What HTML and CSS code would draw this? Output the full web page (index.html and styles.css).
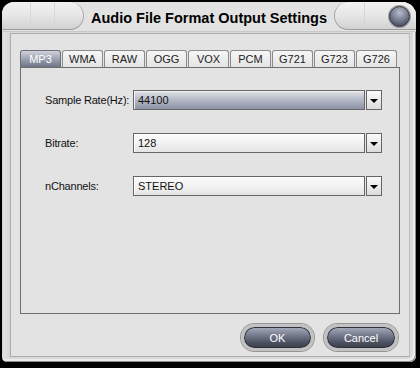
FILE: index.html
```html
<!DOCTYPE html>
<html lang="en">
<head>
    <meta charset="UTF-8">
    <meta name="viewport" content="width=device-width, initial-scale=1.0">
    <title>Audio File Format Output Settings</title>
    <link rel="stylesheet" href="styles.css">
</head>
<body>
    <div class="window">
        <div class="titlebar">
            <div class="bump bump-left"><span class="seam"></span><span class="seam"></span></div>
            <div class="title">Audio File Format Output Settings</div>
            <div class="bump bump-right"><span class="seam"></span><span class="close-btn"></span></div>
        </div>
        <div class="client">
            <div class="tabs">
                <div class="tab active">MP3</div>
                <div class="tab">WMA</div>
                <div class="tab">RAW</div>
                <div class="tab">OGG</div>
                <div class="tab">VOX</div>
                <div class="tab">PCM</div>
                <div class="tab">G721</div>
                <div class="tab">G723</div>
                <div class="tab">G726</div>
            </div>
            <div class="panel">
                <div class="row">
                    <label>Sample Rate(Hz):</label>
                    <div class="combo">
                        <div class="field focused">44100</div>
                        <div class="drop"><span class="arrow"></span></div>
                    </div>
                </div>
                <div class="row">
                    <label>Bitrate:</label>
                    <div class="combo">
                        <div class="field">128</div>
                        <div class="drop"><span class="arrow"></span></div>
                    </div>
                </div>
                <div class="row">
                    <label>nChannels:</label>
                    <div class="combo">
                        <div class="field">STEREO</div>
                        <div class="drop"><span class="arrow"></span></div>
                    </div>
                </div>
            </div>
            <div class="buttons">
                <button class="pill ok">OK</button>
                <button class="pill cancel">Cancel</button>
            </div>
        </div>
    </div>
</body>
</html>
```

FILE: styles.css
```css
body {
    margin: 0;
    background: #000;
    font-family: "Liberation Sans", Arial, sans-serif;
    font-size: 11px;
    color: #111;
}
.window {
    width: 414px;
    height: 360px;
    margin: 2px 0 0 2px;
    background: linear-gradient(to right, #cfcfcf, #e2e2e2 2px, #d8d8d8 7px);
    border-radius: 12px 14px 6px 5px;
    box-sizing: border-box;
    display: flex;
    flex-direction: column;
    overflow: hidden;
    box-shadow: inset -1px -1px 0 #8a8a8a, inset -3px -3px 0 #ececec;
}
.titlebar {
    height: 30px;
    display: flex;
    align-items: flex-start;
    background: #e2e2e2;
    border-bottom: 1px solid #c8c8c8;
    box-sizing: border-box;
}
.bump {
    height: 28px;
    background: linear-gradient(#f2f2f2, #e6e6e6 50%, #d2d2d2);
    border-bottom: 1px solid #9c9c9c;
    box-sizing: border-box;
    display: flex;
    align-items: center;
    position: relative;
}
.bump-left {
    width: 82px;
    border-radius: 12px 14px 14px 0;
    border-right: 1px solid #a8a8a8;
    padding-left: 28px;
    gap: 23px;
}
.bump-right {
    width: 82px;
    border-radius: 14px 14px 0 14px;
    border-left: 1px solid #a8a8a8;
    padding-left: 29px;
}
.seam {
    width: 1px;
    height: 26px;
    background: #d6d6d6;
}
.close-btn {
    position: absolute;
    right: 6px;
    top: 4px;
    width: 19px;
    height: 19px;
    border-radius: 50%;
    border: 1px solid #2a2d36;
    background: radial-gradient(circle at 50% 30%, #b8bdcc, #7b8296 45%, #3e4352 90%);
    box-shadow: 0 0 0 1px #a0a0a0;
}
.title {
    flex: 1;
    text-align: center;
    font-weight: bold;
    font-size: 14.5px;
    line-height: 32px;
    color: #000;
}
.client {
    flex: 1;
    margin: 1px 6px 5px 8px;
    background: #e3e3e3;
    border: 1px solid #ababab;
    border-right-color: #bdbdbd;
    padding: 16px 9px 0;
    box-sizing: border-box;
}
.tabs {
    display: flex;
    gap: 1px;
    height: 17px;
}
.tab {
    width: 41px;
    height: 17px;
    box-sizing: border-box;
    border: 1px solid #8c8c8c;
    border-bottom: none;
    border-radius: 3px 3px 0 0;
    background: linear-gradient(#f6f6f6, #e4e4e4);
    text-align: center;
    line-height: 16px;
    color: #222;
}
.tab.active {
    background: linear-gradient(#cfd2d9, #9da2b0 50%, #6e7486);
    border-color: #6a6e78;
    color: #fff;
}
.panel {
    height: 247px;
    border: 1px solid #6e6e6e;
    box-sizing: border-box;
    padding: 22px 0 0 24px;
    display: flex;
    flex-direction: column;
    gap: 23px;
}
.row {
    display: flex;
    align-items: center;
    height: 20px;
}
.row label {
    width: 88px;
    letter-spacing: -0.2px;
    color: #111;
}
.combo {
    display: flex;
    gap: 1px;
}
.field {
    width: 232px;
    height: 20px;
    box-sizing: border-box;
    border: 1px solid #666;
    background: linear-gradient(#fcfcfc, #f2f2f2 50%, #e4e4e4);
    padding-left: 4px;
    line-height: 18px;
    box-shadow: inset 1px 1px 0 #fff;
}
.field.focused {
    background: linear-gradient(#e2e4e9, #b8bcc8 45%, #8d93a6);
    box-shadow: inset 1px 1px 0 #f0f0f0;
}
.drop {
    width: 16px;
    height: 20px;
    box-sizing: border-box;
    border: 1px solid #666;
    background: linear-gradient(#fafafa, #dcdcdc);
    display: flex;
    align-items: center;
    justify-content: center;
}
.arrow {
    width: 0;
    height: 0;
    border-left: 4px solid transparent;
    border-right: 4px solid transparent;
    border-top: 4px solid #000;
    margin-top: 1px;
}
.buttons {
    display: flex;
    justify-content: flex-end;
    gap: 10px;
    margin-top: 10px;
    padding-right: 2px;
}
.pill {
    height: 27px;
    border-radius: 14px;
    border: 3px solid #c2c2c2;
    box-shadow: 0 0 0 1px #959595, inset 0 0 0 1px #2e323c;
    background: linear-gradient(#a9aebd, #747a8c 40%, #4b5060 75%, #3a3e4b);
    color: #fff;
    font-family: "Liberation Sans", Arial, sans-serif;
    font-size: 11px;
    padding: 0;
}
.ok {
    width: 73px;
}
.cancel {
    width: 74px;
}
```
